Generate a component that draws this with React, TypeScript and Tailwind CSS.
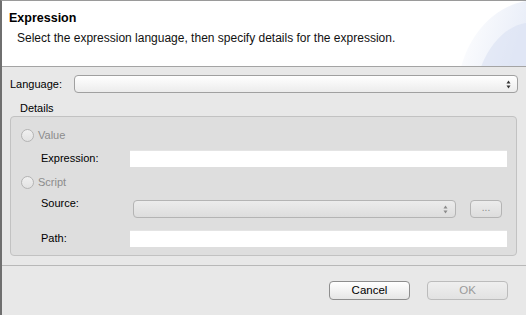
import React from 'react';

const font = { fontFamily: '"Liberation Sans", Arial, sans-serif' };

const Stepper = ({ muted }: { muted?: boolean }) => (
  <svg width="5" height="9" viewBox="0 0 5 9" className="shrink-0">
    <path d="M2.5 0.5 L4.5 3.5 L0.5 3.5 Z" fill={muted ? '#8a8a8a' : '#333'} />
    <path d="M2.5 8.5 L4.5 5.5 L0.5 5.5 Z" fill={muted ? '#8a8a8a' : '#333'} />
  </svg>
);

const Radio = ({ label }: { label: string }) => (
  <div className="flex items-center gap-[4px] h-[14px]">
    <span className="w-[13px] h-[13px] rounded-full border border-[#b4b4b4] bg-gradient-to-b from-[#f0f0f0] to-[#e2e2e2]" />
    <span className="text-[11px] text-[#8c8c8c]">{label}</span>
  </div>
);

const Field = () => <div className="h-[17px] bg-white border-t border-[#e4e4e4] flex-1" />;

const App: React.FC = () => {
  return (
    <div style={font} className="w-[526px] h-[315px] bg-[#e8e8e8] border-l-2 border-l-[#6f6f6f] border-t border-t-[#9a9a9a] flex flex-col text-black overflow-hidden">
      {/* banner */}
      <div className="relative h-[66px] shrink-0 bg-white border-b border-[#a4a4a4] overflow-hidden">
        <svg className="absolute right-0 top-0" width="80" height="66" viewBox="0 0 80 66">
          <defs>
            <linearGradient id="sw" x1="0" y1="0" x2="1" y2="0.3">
              <stop offset="0" stopColor="#ffffff" />
              <stop offset="1" stopColor="#d9e1f3" />
            </linearGradient>
          </defs>
          <path d="M15 66 C 25 30, 50 5, 80 0 L80 66 Z" fill="url(#sw)" opacity="0.55" />
          <path d="M35 66 C 45 40, 62 25, 80 22 L80 66 Z" fill="#d6def2" opacity="0.5" />
        </svg>
        <div className="relative pl-[7px] pt-[10px] text-[12.5px] font-bold leading-[14px]">Expression</div>
        <div className="relative pl-[15px] pt-[6px] text-[12px] leading-[14px] text-[#111]">
          Select the expression language, then specify details for the expression.
        </div>
      </div>

      {/* body */}
      <div className="flex flex-col border-b border-[#b8b8b8] pb-[9px]">
        <div className="flex items-center pl-[8px] pr-[8px] pt-[8px]">
          <span className="text-[11px] w-[64px]">Language:</span>
          <div className="flex-1 h-[18px] rounded-[4px] border border-[#a0a0a0] bg-gradient-to-b from-white to-[#ececec] flex items-center justify-end pr-[6px]">
            <Stepper />
          </div>
        </div>
        <div className="pl-[18px] pt-[8px] text-[11px] leading-[14px] h-[23px]">Details</div>
        <div className="ml-[8px] mr-[9px] h-[140px] rounded-[4px] border border-[#c2c2c2] bg-[#dedede] flex flex-col pl-[10px] pr-[9px] pt-[11px]">
          <Radio label="Value" />
          <div className="flex items-center mt-[8px] h-[17px]">
            <span className="text-[11px] w-[109px] pl-[20px]">Expression:</span>
            <Field />
          </div>
          <div className="mt-[8px]">
            <Radio label="Script" />
          </div>
          <div className="flex items-center mt-[11px] h-[18px]">
            <span className="text-[11px] w-[112px] pl-[20px] self-start leading-[12px] -mt-[3px]">Source:</span>
            <div className="w-[323px] h-[18px] rounded-[4px] border border-[#b4b4b4] bg-gradient-to-b from-[#ececec] to-[#dddddd] flex items-center justify-end pr-[7px]">
              <Stepper muted />
            </div>
            <div className="ml-[14px] w-[32px] h-[18px] rounded-[4px] border border-[#b4b4b4] bg-gradient-to-b from-[#ececec] to-[#dddddd] flex items-center justify-center text-[10px] text-[#8a8a8a] leading-none pb-[2px]">
              ...
            </div>
          </div>
          <div className="flex items-center mt-[11px] h-[18px]">
            <span className="text-[11px] w-[109px] pl-[20px]">Path:</span>
            <Field />
          </div>
        </div>
      </div>

      {/* buttons */}
      <div className="flex justify-end pt-[15px] pr-[18px] gap-[17px]">
        <div className="w-[81px] h-[19px] rounded-[4px] border border-[#8e8e8e] bg-gradient-to-b from-white to-[#e6e6e6] flex items-center justify-center text-[11.5px]">
          Cancel
        </div>
        <div className="w-[81px] h-[19px] rounded-[4px] border border-[#bcbcbc] bg-gradient-to-b from-[#efefef] to-[#e2e2e2] flex items-center justify-center text-[11.5px] text-[#9a9a9a]">
          OK
        </div>
      </div>
    </div>
  );
};

export default App;
